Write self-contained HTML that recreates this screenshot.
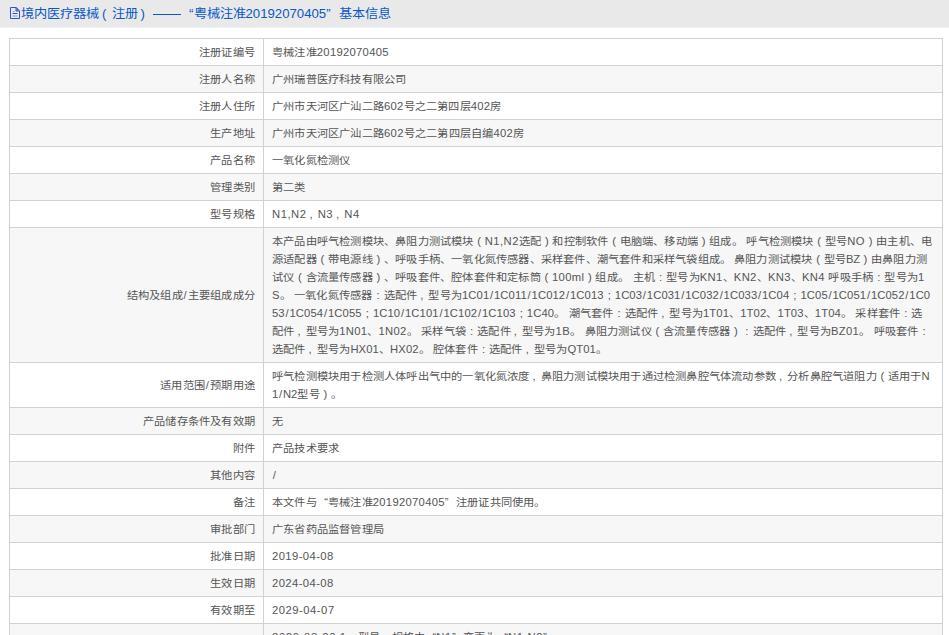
<!DOCTYPE html>
<html lang="zh-CN">
<head>
<meta charset="utf-8">
<style>
html,body{margin:0;padding:0;background:#fff;overflow:hidden;}
body{width:949px;height:635px;font-family:"Liberation Sans",sans-serif;color:#555;position:relative;}
.hd{position:absolute;left:0;top:0;width:949px;height:27px;background:#e9e9e9;box-shadow:0 1px 0 #eef0f6;}
.hd .t{position:absolute;left:21px;top:6px;font-size:13.2px;line-height:18px;color:#0a57c9;transform-origin:0 0;transform:scaleY(0.93);white-space:nowrap;letter-spacing:0px;--ls:0px;}
.hd .a{letter-spacing:calc(0px + var(--ls));}
.hd svg{position:absolute;left:0;top:0;}
table{position:absolute;left:9px;top:38px;width:934px;border-collapse:collapse;table-layout:fixed;font-size:11.25px;}
td{border:1px solid #d2d2d2;padding:4px 8px;vertical-align:middle;letter-spacing:0.2px;}
td.l{width:237px;text-align:right;}
.ln{line-height:18px;height:18px;white-space:nowrap;position:relative;top:0px;transform:scaleY(0.9);transform-origin:50% 50%;}
tr:nth-child(even) td{background:#f7f7f7;}
.a{letter-spacing:calc(0.2px + var(--ls));}
.ln{--ls:0.27px;}
b{font-weight:normal;display:inline-block;width:11.2px;letter-spacing:0;}
.hd b{width:13px;}
b.pc{text-align:center;}
u{display:inline-block;text-decoration:none;white-space:nowrap;text-align:justify;text-align-last:justify;text-justify:inter-character;}
i.sl{font-style:normal;padding-left:0.75px;letter-spacing:calc(0.2px + var(--ls) + 0.75px);}
b.pcm{text-align:left;padding-left:3px;box-sizing:border-box;}
.hd b.hpl{text-align:left;padding-left:2.9px;box-sizing:border-box;}
.hd b.hpr{text-align:left;padding-left:2.55px;box-sizing:border-box;}
b.pr{text-align:right;}
b.pl{text-align:left;}
b.pd{text-align:center;overflow:hidden;vertical-align:top;}
</style>
</head>
<body>
<div class="hd">
<svg width="30" height="27" viewBox="0 0 30 27"><g fill="none" stroke="#2f55cc" stroke-width="1"><path d="M10.5 7.5H16.2L19.5 10.8V18.5H10.5Z"/><path d="M16 7.5V11H19.5" stroke-linejoin="miter"/><path d="M13 11.5H14.5" opacity="0.55"/><path d="M12.5 13.5H17.5"/><path d="M12.5 16H17.5" stroke-width="1.6" opacity="0.35"/></g><path d="M16.5 8V10.5H19Z" fill="#2f55cc"/></svg>
<div class="t"><u style="width:78.00px">境内医疗器械</u><b class="pc hpl">(</b><u style="width:26.00px">注册</u><b class="pc hpr">)</b><span style="display:inline-block;width:29.5px"></span><b class="pr">“</b><u style="width:52.00px">粤械注准</u><span class="a">20192070405</span><b class="pl">”</b><u style="width:52.00px">基本信息</u></div>
<div style="position:absolute;left:153px;top:14px;width:28px;height:1px;background:#0a57c9"></div>
</div>
<table>
<tr><td class="l"><div class="ln" id="lab0"><u style="width:56.00px">注册证编号</u></div></td><td class="v"><div class="ln" id="l0_0" style="--ls:0.088px"><u style="width:44.80px">粤械注准</u><span class="a">20192070405</span></div></td></tr>
<tr><td class="l"><div class="ln" id="lab1"><u style="width:56.00px">注册人名称</u></div></td><td class="v"><div class="ln" id="l1_0"><u style="width:134.40px">广州瑞普医疗科技有限公司</u></div></td></tr>
<tr><td class="l"><div class="ln" id="lab2"><u style="width:56.00px">注册人住所</u></div></td><td class="v"><div class="ln" id="l2_0" style="--ls:0.070px"><u style="width:112.00px">广州市天河区广汕二路</u><span class="a">602</span><u style="width:67.20px">号之二第四层</u><span class="a">402</span><u style="width:11.20px">房</u></div></td></tr>
<tr><td class="l"><div class="ln" id="lab3"><u style="width:44.80px">生产地址</u></div></td><td class="v"><div class="ln" id="l3_0" style="--ls:0.137px"><u style="width:112.00px">广州市天河区广汕二路</u><span class="a">602</span><u style="width:89.60px">号之二第四层自编</u><span class="a">402</span><u style="width:11.20px">房</u></div></td></tr>
<tr><td class="l"><div class="ln" id="lab4"><u style="width:44.80px">产品名称</u></div></td><td class="v"><div class="ln" id="l4_0"><u style="width:78.40px">一氧化氮检测仪</u></div></td></tr>
<tr><td class="l"><div class="ln" id="lab5"><u style="width:44.80px">管理类别</u></div></td><td class="v"><div class="ln" id="l5_0"><u style="width:33.60px">第二类</u></div></td></tr>
<tr><td class="l"><div class="ln" id="lab6"><u style="width:44.80px">型号规格</u></div></td><td class="v"><div class="ln" id="l6_0" style="--ls:0.314px"><span class="a">N1,N2</span><b class="pcm">,</b><span class="a">N3</span><b class="pcm">,</b><span class="a">N4</span></div></td></tr>
<tr><td class="l"><div class="ln" id="lab7"><u style="width:56.00px">结构及组成</u><span class="a"><i class="sl">/</i></span><u style="width:67.20px">主要组成成分</u></div></td><td class="v"><div class="ln" id="l7_0" style="--ls:0.245px"><u style="width:201.60px">本产品由呼气检测模块、鼻阻力测试模块</u><b class="pc">(</b><span class="a">N1,N2</span><u style="width:22.40px">选配</u><b class="pc">)</b><u style="width:56.00px">和控制软件</u><b class="pc">(</b><u style="width:78.40px">电脑端、移动端</u><b class="pc">)</b><u style="width:33.60px">组成。</u><span class="a"> </span><u style="width:67.20px">呼气检测模块</u><b class="pc">(</b><u style="width:22.40px">型号</u><span class="a">NO</span><b class="pc">)</b><u style="width:56.00px">由主机、电</u></div><div class="ln" id="l7_1" style="--ls:-0.463px"><u style="width:44.80px">源适配器</u><b class="pc">(</b><u style="width:44.80px">带电源线</u><b class="pc">)</b><u style="width:347.20px">、呼吸手柄、一氧化氮传感器、采样套件、潮气套件和采样气袋组成。</u><span class="a"> </span><u style="width:78.40px">鼻阻力测试模块</u><b class="pc">(</b><u style="width:22.40px">型号</u><span class="a">BZ</span><b class="pc">)</b><u style="width:56.00px">由鼻阻力测</u></div><div class="ln" id="l7_2" style="--ls:0.140px"><u style="width:22.40px">试仪</u><b class="pc">(</b><u style="width:67.20px">含流量传感器</u><b class="pc">)</b><u style="width:156.80px">、呼吸套件、腔体套件和定标筒</u><b class="pc">(</b><span class="a">100ml</span><b class="pc">)</b><u style="width:33.60px">组成。</u><span class="a"> </span><u style="width:22.40px">主机</u><b class="pc">:</b><u style="width:33.60px">型号为</u><span class="a">KN1</span><u style="width:11.20px">、</u><span class="a">KN2</span><u style="width:11.20px">、</u><span class="a">KN3</span><u style="width:11.20px">、</u><span class="a">KN4 </span><u style="width:44.80px">呼吸手柄</u><b class="pc">:</b><u style="width:33.60px">型号为</u><span class="a">1</span></div><div class="ln" id="l7_3" style="--ls:-0.102px"><span class="a">S</span><u style="width:11.20px">。</u><span class="a"> </span><u style="width:78.40px">一氧化氮传感器</u><b class="pc">:</b><u style="width:33.60px">选配件</u><b class="pcm">,</b><u style="width:33.60px">型号为</u><span class="a">1C01<i class="sl">/</i>1C011<i class="sl">/</i>1C012<i class="sl">/</i>1C013</span><b class="pc">;</b><span class="a">1C03<i class="sl">/</i>1C031<i class="sl">/</i>1C032<i class="sl">/</i>1C033<i class="sl">/</i>1C04</span><b class="pc">;</b><span class="a">1C05<i class="sl">/</i>1C051<i class="sl">/</i>1C052<i class="sl">/</i>1C0</span></div><div class="ln" id="l7_4" style="--ls:-0.089px"><span class="a">53<i class="sl">/</i>1C054<i class="sl">/</i>1C055</span><b class="pc">;</b><span class="a">1C10<i class="sl">/</i>1C101<i class="sl">/</i>1C102<i class="sl">/</i>1C103</span><b class="pc">;</b><span class="a">1C40</span><u style="width:11.20px">。</u><span class="a"> </span><u style="width:44.80px">潮气套件</u><b class="pc">:</b><u style="width:33.60px">选配件</u><b class="pcm">,</b><u style="width:33.60px">型号为</u><span class="a">1T01</span><u style="width:11.20px">、</u><span class="a">1T02</span><u style="width:11.20px">、</u><span class="a">1T03</span><u style="width:11.20px">、</u><span class="a">1T04</span><u style="width:11.20px">。</u><span class="a"> </span><u style="width:44.80px">采样套件</u><b class="pc">:</b><u style="width:11.20px">选</u></div><div class="ln" id="l7_5" style="--ls:0.105px"><u style="width:22.40px">配件</u><b class="pcm">,</b><u style="width:33.60px">型号为</u><span class="a">1N01</span><u style="width:11.20px">、</u><span class="a">1N02</span><u style="width:11.20px">。</u><span class="a"> </span><u style="width:44.80px">采样气袋</u><b class="pc">:</b><u style="width:33.60px">选配件</u><b class="pcm">,</b><u style="width:33.60px">型号为</u><span class="a">1B</span><u style="width:11.20px">。</u><span class="a"> </span><u style="width:67.20px">鼻阻力测试仪</u><b class="pc">(</b><u style="width:67.20px">含流量传感器</u><b class="pc">)</b><b class="pc">:</b><u style="width:33.60px">选配件</u><b class="pcm">,</b><u style="width:33.60px">型号为</u><span class="a">BZ01</span><u style="width:11.20px">。</u><span class="a"> </span><u style="width:44.80px">呼吸套件</u><b class="pc">:</b></div><div class="ln" id="l7_6" style="--ls:-0.099px"><u style="width:33.60px">选配件</u><b class="pcm">,</b><u style="width:33.60px">型号为</u><span class="a">HX01</span><u style="width:11.20px">、</u><span class="a">HX02</span><u style="width:11.20px">。</u><span class="a"> </span><u style="width:44.80px">腔体套件</u><b class="pc">:</b><u style="width:33.60px">选配件</u><b class="pcm">,</b><u style="width:33.60px">型号为</u><span class="a">QT01</span><u style="width:11.20px">。</u></div></td></tr>
<tr><td class="l"><div class="ln" id="lab8"><u style="width:44.80px">适用范围</u><span class="a"><i class="sl">/</i></span><u style="width:44.80px">预期用途</u></div></td><td class="v"><div class="ln" id="l8_0" style="--ls:0.270px"><u style="width:257.60px">呼气检测模块用于检测人体呼出气中的一氧化氮浓度</u><b class="pcm">,</b><u style="width:235.20px">鼻阻力测试模块用于通过检测鼻腔气体流动参数</u><b class="pcm">,</b><u style="width:89.60px">分析鼻腔气道阻力</u><b class="pc">(</b><u style="width:33.60px">适用于</u><span class="a">N</span></div><div class="ln" id="l8_1" style="--ls:-0.180px"><span class="a">1<i class="sl">/</i>N2</span><u style="width:22.40px">型号</u><b class="pc">)</b><u style="width:11.20px">。</u></div></td></tr>
<tr><td class="l"><div class="ln" id="lab9"><u style="width:112.00px">产品储存条件及有效期</u></div></td><td class="v"><div class="ln" id="l9_0"><u style="width:11.20px">无</u></div></td></tr>
<tr><td class="l"><div class="ln" id="lab10"><u style="width:22.40px">附件</u></div></td><td class="v"><div class="ln" id="l10_0"><u style="width:67.20px">产品技术要求</u></div></td></tr>
<tr><td class="l"><div class="ln" id="lab11"><u style="width:44.80px">其他内容</u></div></td><td class="v"><div class="ln" id="l11_0"><span class="a"><i class="sl">/</i></span></div></td></tr>
<tr><td class="l"><div class="ln" id="lab12"><u style="width:22.40px">备注</u></div></td><td class="v"><div class="ln" id="l12_0" style="--ls:0.088px"><u style="width:44.80px">本文件与</u><b class="pr">“</b><u style="width:44.80px">粤械注准</u><span class="a">20192070405</span><b class="pl">”</b><u style="width:89.60px">注册证共同使用。</u></div></td></tr>
<tr><td class="l"><div class="ln" id="lab13"><u style="width:44.80px">审批部门</u></div></td><td class="v"><div class="ln" id="l13_0"><u style="width:112.00px">广东省药品监督管理局</u></div></td></tr>
<tr><td class="l"><div class="ln" id="lab14"><u style="width:44.80px">批准日期</u></div></td><td class="v"><div class="ln" id="l14_0" style="--ls:0.210px"><span class="a">2019-04-08</span></div></td></tr>
<tr><td class="l"><div class="ln" id="lab15"><u style="width:44.80px">生效日期</u></div></td><td class="v"><div class="ln" id="l15_0" style="--ls:0.210px"><span class="a">2024-04-08</span></div></td></tr>
<tr><td class="l"><div class="ln" id="lab16"><u style="width:44.80px">有效期至</u></div></td><td class="v"><div class="ln" id="l16_0" style="--ls:0.310px"><span class="a">2029-04-07</span></div></td></tr>
<tr><td class="l"><div class="ln" id="lab17"><u style="width:44.80px">变更情况</u></div></td><td class="v"><div class="ln" id="l17_0" style="--ls:0.450px"><span class="a">2020-03-20 1</span><u style="width:78.40px">、型号、规格由</u><b class="pr">“</b><span class="a">N1</span><b class="pl">”</b><u style="width:33.60px">变更为</u><b class="pr">“</b><span class="a">N1,N2</span><b class="pl">”</b><u style="width:11.20px">。</u></div><div class="ln" id="l17_1"><span class="a">2</span><u style="width:112.00px">、产品技术要求变更。</u></div><div class="ln" id="l17_2"></div><div class="ln" id="l17_3"></div><div class="ln" id="l17_4"></div></td></tr>
</table>
</body>
</html>
